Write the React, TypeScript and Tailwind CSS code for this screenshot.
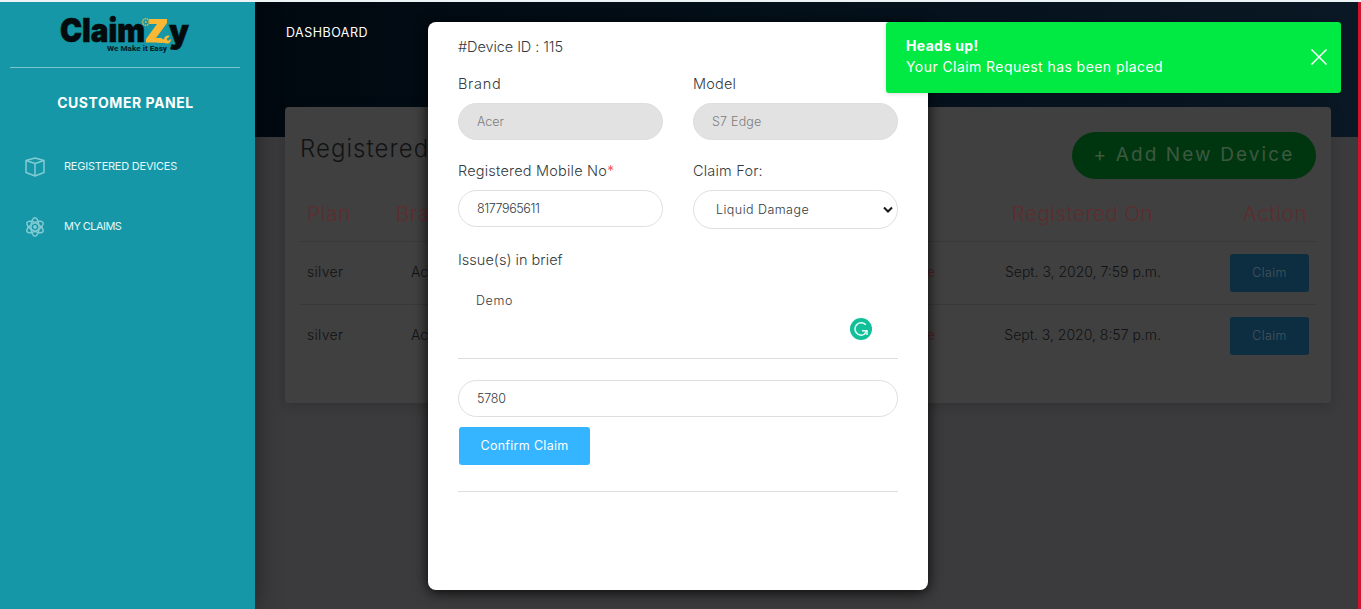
import React from "react";

const rows = [
  { plan: "silver", brand: "Acer", status: "Active", date: "Sept. 3, 2020, 7:59 p.m." },
  { plan: "silver", brand: "Acer", status: "Active", date: "Sept. 3, 2020, 8:57 p.m." },
];

function Logo() {
  return (
    <svg width="132" height="46" viewBox="0 0 132 46" className="block overflow-visible">
      <g fontFamily="Inter, sans-serif" fontWeight="900" fill="#030b0d" stroke="#030b0d" strokeWidth=".6">
        <text x="1" y="29" fontSize="32.500" textLength="85" lengthAdjust="spacingAndGlyphs">Claim</text>
        <text x="110" y="30" fontSize="32" textLength="20" lengthAdjust="spacingAndGlyphs">y</text>
      </g>
      <path d="M90 6H108V10L97 25H103V29.500H87V26L98 11H90Z" fill="#fbb834" />
      <circle cx="86.800" cy="9" r="3.300" fill="none" stroke="#c9b64c" strokeWidth="1.500" strokeDasharray="1.700 .6" />
      <circle cx="86.800" cy="9" r="1" fill="#d7b545" />
      <path d="M100 25L105 26.500A4 4 0 0 1 111 23L107.500 26L109 28L112 26A4 4 0 0 1 106 30L98 29.500Z" fill="#fbb834" />
      <text x="48" y="38" fontFamily="Roboto, sans-serif" fontWeight="800" fontSize="7.500" fill="#04242a" textLength="60" lengthAdjust="spacingAndGlyphs">We Make it Easy</text>
    </svg>
  );
}

function BoxIcon() {
  return (
    <svg width="20" height="20" viewBox="0 0 20 20" fill="none" stroke="#83cbd3" strokeWidth="1.500" strokeLinejoin="round">
      <path d="M1 3.500L10 1L19 3.500V15.500L10 19L1 15.500Z" />
      <path d="M1 3.500L10 6.500L19 3.500M10 6.500V19" />
    </svg>
  );
}

function AtomIcon() {
  return (
    <svg width="20" height="20" viewBox="0 0 20 20" fill="none" stroke="#83cbd3" strokeWidth="1.500">
      <ellipse cx="10" cy="10" rx="4" ry="9.200" />
      <ellipse cx="10" cy="10" rx="4" ry="9.200" transform="rotate(60 10 10)" />
      <ellipse cx="10" cy="10" rx="4" ry="9.200" transform="rotate(120 10 10)" />
      <circle cx="10" cy="10" r="1.900" fill="#83cbd3" stroke="none" />
    </svg>
  );
}

function Sidebar() {
  return (
    <aside className="relative z-10 w-[255px] shrink-0 bg-[#1597a7] text-white shadow-[3px_0_22px_rgba(0,0,0,0.35)]">
      <div className="mr-[15px] ml-[10px] flex h-[66px] justify-center border-b border-[#79c4cd] pt-[11px]">
        <Logo />
      </div>
      <h1 className="mt-[25px] pr-[4px] text-center text-[14px] leading-5 font-bold tracking-[0.550px]">CUSTOMER PANEL</h1>
      <nav className="mt-[24px] text-[11px] leading-5 text-[#e3f8fa]">
        <a className="flex h-[60px] items-center gap-[19px] pl-[25px]"><BoxIcon /><span className="-mt-[2px] tracking-[-0.230px]">REGISTERED DEVICES</span></a>
        <a className="flex h-[60px] items-center gap-[19px] pl-[25px]"><AtomIcon /><span className="-mt-[2px] tracking-[-0.550px]">MY CLAIMS</span></a>
      </nav>
    </aside>
  );
}

function DeviceTable() {
  return (
    <div className="mx-[14px] mt-[7px]">
      <div className="grid h-[56px] grid-cols-[89px_526px_321px_67px] items-center border-b border-[#37393a] pt-px pl-[8px] text-[20.500px] font-light text-[#5f2c2f]">
        <span className="tracking-[0.800px]">Plan</span>
        <span className="tracking-[0.400px]">Brand</span>
        <span className="justify-self-center tracking-[0.500px]">Registered On</span>
        <span className="tracking-[0.700px]">Action</span>
      </div>
      {rows.map((r, i) => (
        <div key={r.date} className={i === 0 ? "grid h-[63px] grid-cols-[104px_480px_44px_226px_148px] items-center border-b border-[#37393a] pl-[8px] text-[14px] font-light text-[#111213]" : "grid h-[62px] grid-cols-[104px_480px_44px_226px_148px] items-center pl-[8px] text-[14px] font-light text-[#111213]"}>
          <span className="-mt-[3px] tracking-[0.300px]">{r.plan}</span>
          <span className="-mt-[3px]">{r.brand}</span>
          <span className="-mt-[3px] text-right text-[#541c20]">{r.status}</span>
          <span className="-mt-[3px] text-right">{r.date}</span>
          <button className="h-[38px] w-[79px] justify-self-end rounded-[3px] bg-[#0d2d40] text-[12.500px] tracking-[0.400px] text-[#44555f]">Claim</button>
        </div>
      ))}
    </div>
  );
}

function Field({ label, required, children }: { label: React.ReactNode; required?: boolean; children: React.ReactNode }) {
  return (
    <div>
      <label className="block text-[14.500px] leading-5 tracking-[0.200px]">
        {label}
        {required && <span className="text-[#f0404a]">*</span>}
      </label>
      {children}
    </div>
  );
}

function ClaimModal() {
  return (
    <section className="absolute top-[20px] left-[428px] z-20 h-[568px] w-[500px] rounded-[8px] bg-white px-[30px] pt-[15px] font-light text-[#343a40] shadow-[0_2px_14px_rgba(0,0,0,0.9)]">
      <h2 className="text-[14.500px] leading-5 tracking-[-0.080px]">#Device ID : 115</h2>
      <div className="mt-[17px] grid grid-cols-2 gap-x-[30px]">
        <Field label={<span className="tracking-[0.700px]">Brand</span>}>
          <div className="mt-[9px] flex h-[37px] items-center rounded-full border border-[#dedede] bg-[#e2e2e2] px-[18px] pt-[2px] text-[12.500px] text-[#7d7d7d]">Acer</div>
        </Field>
        <Field label="Model">
          <div className="mt-[9px] flex h-[37px] items-center rounded-full border border-[#dedede] bg-[#e2e2e2] px-[18px] pt-[2px] text-[12.500px] tracking-[0.200px] text-[#7d7d7d]">S7 Edge</div>
        </Field>
      </div>
      <div className="mt-[21px] grid grid-cols-2 gap-x-[30px]">
        <Field label="Registered Mobile No" required>
          <div className="mt-[9px] flex h-[37px] items-center rounded-full border border-[#dfdfe2] px-[18px] pt-[2px] text-[12.500px] tracking-[-0.400px]">8177965611</div>
        </Field>
        <Field label="Claim For:">
          <div className="mt-[9px] flex h-[39px] items-center justify-between rounded-full border border-[#dfdfe2] pr-[4px] pl-[22px] text-[12.500px] tracking-[0.450px]">
            <span className="pt-[2px]">Liquid Damage</span>
            <svg width="10" height="8" viewBox="0 0 10 8" fill="none" stroke="#171717" strokeWidth="2"><path d="M1 1.500L5 5.500L9 1.500" /></svg>
          </div>
        </Field>
      </div>
      <div className="relative mt-[21px] h-[109px] border-b border-[#dedee1]">
        <p className="text-[14.500px] leading-5 tracking-[0.020px]">Issue(s) in brief</p>
        <p className="mt-[21px] pl-[18px] text-[12.500px] leading-5 tracking-[0.600px]">Demo</p>
        <svg className="absolute top-[68px] left-[392px]" width="22" height="22" viewBox="0 0 22 22" fill="none">
          <circle cx="11" cy="11" r="11" fill="#11bf99" />
          <path d="M15.800 6.800A6.200 6.200 0 1 0 14.500 16.200L16.500 13" stroke="#e5fff8" strokeWidth="1.500" />
          <path d="M12 12.700H17V17" stroke="#e5fff8" strokeWidth="1.500" />
        </svg>
      </div>
      <div className="mt-[21px] flex h-[37px] items-center rounded-full border border-[#dfdfe2] px-[18px] pt-[2px] text-[12.500px] tracking-[-0.200px]">5780</div>
      <button className="mt-[10px] ml-px block h-[38px] w-[131px] rounded-[3px] bg-[#35b5ff] text-[12.500px] font-normal tracking-[0.300px] text-white">Confirm Claim</button>
      <hr className="mt-[26px] border-[#dedee1]" />
    </section>
  );
}

function Toast() {
  return (
    <div className="absolute top-[20px] left-[886px] z-30 flex h-[71px] w-[455px] items-center justify-between rounded-[3px] bg-[#00ea43] pr-[14px] pl-[20px] text-[14px] leading-[21px] text-white shadow-[0_1px_4px_rgba(0,0,0,0.15)]">
      <div className="pb-[3px]">
        <p className="font-bold tracking-[0.350px]">Heads up!</p>
        <p className="tracking-[0.430px]">Your Claim Request has been placed</p>
      </div>
      <svg className="-mt-[2px]" width="16" height="16" viewBox="0 0 16 16" stroke="white" strokeWidth="1.500"><path d="M.5 .5L15.500 15.500M15.500 .5L.5 15.500" /></svg>
    </div>
  );
}

export default function App() {
  return (
    <div className="relative flex h-[609px] w-[1361px] overflow-hidden border-t-2 border-[#edf4f5] bg-[#3b3b3d] font-['Inter',sans-serif]">
      <Sidebar />
      <main className="min-w-0 flex-1">
        <header className="h-[135px] bg-linear-to-r from-[#010910] to-[#0a1825] px-[31px] pt-[21px] text-[12.500px] leading-5 tracking-[0.500px] text-white">DASHBOARD</header>
        <div className="relative -mt-[30px] mr-[27px] ml-[30px] h-[296px] rounded-[4px] bg-[#404040] pt-[25px] shadow-[0_2px_12px_rgba(20,20,22,0.25)]">
          <div className="flex h-[47px] items-start justify-between pr-[15px] pl-[15px]">
            <h2 className="mt-[-1px] text-[24px] leading-9 font-light tracking-[1.050px] text-[#121314]">Registered Devices</h2>
            <button className="h-[47px] w-[244px] rounded-full bg-[#00360f] text-[19px] tracking-[2.100px] text-[#3c5940]">+ Add New Device</button>
          </div>
          <DeviceTable />
        </div>
      </main>
      <div className="w-[3px] bg-[#d1122b]" />
      <ClaimModal />
      <Toast />
    </div>
  );
}
